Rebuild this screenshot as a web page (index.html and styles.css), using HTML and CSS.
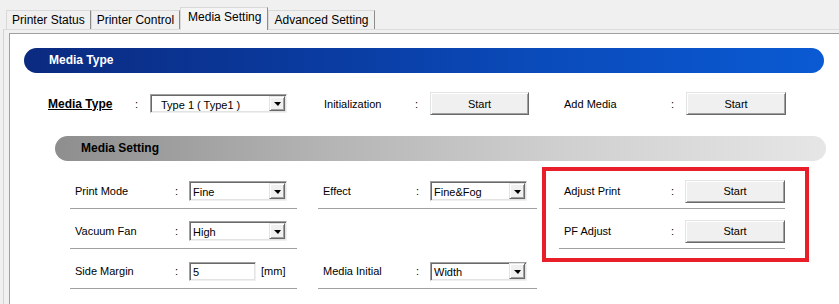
FILE: index.html
```html
<!DOCTYPE html>
<html lang="en">
<head>
    <meta charset="UTF-8">
    <title>Media Setting</title>
    <link rel="stylesheet" href="styles.css">
</head>
<body>
    <div class="tabs">
        <div class="tab">Printer Status</div>
        <div class="tab">Printer Control</div>
        <div class="tab active">Media Setting</div>
        <div class="tab">Advanced Setting</div>
    </div>

    <div class="panel">
        <div class="frame">
            <div class="bar bar-blue">Media Type</div>

            <div class="type-row">
                <span class="lbl lbl-strong">Media Type</span>
                <span class="colon">:</span>
                <div class="combo combo-type"><span class="combo-text">Type 1 ( Type1 )</span><span class="combo-btn"></span></div>
                <span class="lbl lbl-init">Initialization</span>
                <span class="colon">:</span>
                <button class="btn">Start</button>
                <span class="lbl lbl-add">Add Media</span>
                <span class="colon">:</span>
                <button class="btn">Start</button>
            </div>

            <div class="bar bar-gray">Media Setting</div>

            <div class="settings">
                <div class="col col-left">
                    <div class="row">
                        <span class="lbl">Print Mode</span><span class="colon">:</span>
                        <div class="combo"><span class="combo-text">Fine</span><span class="combo-btn"></span></div>
                    </div>
                    <div class="row">
                        <span class="lbl">Vacuum Fan</span><span class="colon">:</span>
                        <div class="combo"><span class="combo-text">High</span><span class="combo-btn"></span></div>
                    </div>
                    <div class="row">
                        <span class="lbl">Side Margin</span><span class="colon">:</span>
                        <div class="field">5</div>
                        <span class="unit">[mm]</span>
                    </div>
                </div>

                <div class="col col-mid">
                    <div class="row">
                        <span class="lbl">Effect</span><span class="colon">:</span>
                        <div class="combo"><span class="combo-text">Fine&amp;Fog</span><span class="combo-btn"></span></div>
                    </div>
                    <div class="row row-empty"></div>
                    <div class="row">
                        <span class="lbl">Media Initial</span><span class="colon">:</span>
                        <div class="combo combo-low"><span class="combo-text">Width</span><span class="combo-btn"></span></div>
                    </div>
                </div>

                <div class="redbox">
                    <div class="row">
                        <span class="lbl">Adjust Print</span><span class="colon">:</span>
                        <button class="btn">Start</button>
                    </div>
                    <div class="row">
                        <span class="lbl">PF Adjust</span><span class="colon">:</span>
                        <button class="btn">Start</button>
                    </div>
                </div>
            </div>
        </div>
    </div>
</body>
</html>
```

FILE: styles.css
```css
body {
    margin: 0;
    background-color: #f0f0f0;
    font-family: "Liberation Sans", Arial, sans-serif;
    font-size: 11px;
    color: #000;
    overflow: hidden;
}

/* tab strip */
.tabs {
    display: flex;
    align-items: flex-end;
    height: 29px;
    padding-left: 6px;
    box-sizing: border-box;
}

.tab {
    height: 19px;
    line-height: 19px;
    padding: 0 5px;
    font-size: 12px;
    background-color: #f0f0f0;
    border: 1px solid #d9d9d9;
    border-right-color: #8c8c8c;
    border-bottom: none;
    box-sizing: border-box;
}

.tab.active {
    height: 23px;
    line-height: 18px;
    padding: 0 6px 0 7px;
    margin-bottom: -1px;
    background-color: #f4f4f4;
    position: relative;
}

.panel {
    margin-left: 3px;
    border-top: 1px solid #dcdcdc;
    border-left: 1px solid #d4d4d4;
    padding: 3px 0 0 5px;
}

.frame {
    height: 271px;
    box-sizing: border-box;
    overflow: hidden;
    background-color: #fff;
    border-top: 1px solid #a0a0a0;
    border-left: 1px solid #a0a0a0;
    padding: 14px 0 0 14px;
}

/* section headers */
.bar {
    height: 25px;
    line-height: 25px;
    border-radius: 13px;
    font-size: 12px;
    font-weight: bold;
}

.bar-blue {
    width: 800px;
    padding-left: 25px;
    box-sizing: border-box;
    color: #fff;
    background: linear-gradient(to right, #0b2a80, #0a3a9e 35%, #0a4bbb 65%, #0a5ad3);
}

.bar-gray {
    width: 771px;
    margin: 21px 0 0 31px;
    padding-left: 26px;
    box-sizing: border-box;
    color: #000;
    background: linear-gradient(to right, #8e8e8e, #b4b4b4 35%, #cfcfcf 65%, #e6e6e6);
}

/* media type line */
.type-row {
    display: flex;
    align-items: center;
    height: 23px;
    margin: 19px 0 0 24px;
}

.lbl {
    white-space: nowrap;
}

.lbl-strong {
    width: 87px;
    font-size: 12px;
    font-weight: bold;
    text-decoration: underline;
}

.lbl-init {
    width: 91px;
    margin-left: 37px;
}

.lbl-add {
    width: 107px;
    margin-left: 35px;
}

.colon {
    width: 14px;
    flex-shrink: 0;
}

.type-row .colon {
    width: 15px;
}

/* controls */
.combo {
    display: flex;
    align-items: center;
    justify-content: space-between;
    width: 98px;
    height: 20px;
    box-sizing: border-box;
    background-color: #fff;
    border: 1px solid;
    border-color: #a0a0a0 #f0f0f0 #f0f0f0 #a0a0a0;
    box-shadow: inset 1px 1px #696969, inset -1px -1px #e3e3e3;
    padding: 0 1px 0 3px;
}

.combo-type {
    width: 137px;
    height: 19px;
    padding-left: 10px;
}

.combo-low {
    height: 19px;
}

.combo-text {
    padding-top: 2px;
    white-space: nowrap;
}

.combo-btn {
    display: flex;
    align-items: center;
    justify-content: center;
    width: 16px;
    height: 16px;
    box-sizing: border-box;
    background-color: #f0f0f0;
    border: 1px solid;
    border-color: #e3e3e3 #696969 #696969 #e3e3e3;
    box-shadow: inset 1px 1px #fff, inset -1px -1px #a0a0a0;
}

.combo-btn::after {
    content: "";
    border-left: 4px solid transparent;
    border-right: 3px solid transparent;
    border-top: 4px solid #000;
    margin-top: 1px;
}

.combo-type .combo-btn {
    height: 15px;
}

.field {
    width: 67px;
    height: 19px;
    line-height: 19px;
    box-sizing: border-box;
    padding-left: 3px;
    border: 1px solid;
    border-color: #a0a0a0 #f0f0f0 #f0f0f0 #a0a0a0;
    box-shadow: inset 1px 1px #696969, inset -1px -1px #e3e3e3;
}

.unit {
    margin-left: 5px;
}

.btn {
    width: 100px;
    height: 23px;
    padding: 0;
    font-family: "Liberation Sans", Arial, sans-serif;
    font-size: 11px;
    color: #000;
    background-color: #f0f0f0;
    border: 1px solid;
    border-color: #e3e3e3 #696969 #696969 #e3e3e3;
    box-shadow: inset 1px 1px #fff, inset -1px -1px #a0a0a0;
}

.type-row .btn:first-of-type {
    width: 99px;
}

/* media setting grid */
.settings {
    display: flex;
    align-items: flex-start;
    margin: 6px 0 0 46px;
}

.col {
    margin-top: 2px;
}

.col-left {
    width: 227px;
}

.col-mid {
    width: 219px;
    margin-left: 21px;
}

.row {
    display: flex;
    align-items: center;
    height: 40px;
    box-sizing: border-box;
    padding: 5px 0 0 5px;
    border-bottom: 1px solid #a0a0a0;
}

.row-empty {
    border-bottom-color: transparent;
}

.col-left .lbl {
    width: 100px;
}

.col-mid .lbl {
    width: 93px;
}

.col-mid .combo {
    width: 97px;
}

.redbox {
    width: 267px;
    margin-left: 5px;
    box-sizing: border-box;
    border: 4px solid #e81f28;
    padding: 0 0 9px 13px;
}

.redbox .row {
    width: 226px;
}

.redbox .row:first-child {
    height: 38px;
    padding-top: 3px;
}

.redbox .lbl {
    width: 107px;
}
```
